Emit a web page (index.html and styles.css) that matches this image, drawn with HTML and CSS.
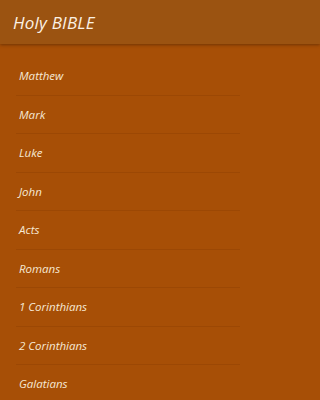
FILE: index.html
```html
<!DOCTYPE html>
<html>
<head>
<meta charset="utf-8">
<link rel="stylesheet" href="styles.css">
</head>
<body>
<header class="appbar"><h1 class="title">Holy BIBLE</h1></header>
<ul class="books">
<li class="book">Matthew</li>
<li class="book">Mark</li>
<li class="book">Luke</li>
<li class="book">John</li>
<li class="book">Acts</li>
<li class="book">Romans</li>
<li class="book">1 Corinthians</li>
<li class="book">2 Corinthians</li>
<li class="book">Galatians</li>
</ul>
</body>
</html>
```
FILE: styles.css
```css
html {
  background: #a74f06;
}
body {
  margin: 0;
  padding: 0;
  height: 400px;
  overflow: hidden;
  background: #a74f06;
  font-family: "Open Sans", "DejaVu Sans", sans-serif;
  color: #f6e8d4;
}
.appbar {
  height: 44px;
  background: #9b5311;
  box-shadow: 0 1px 3px rgba(60, 25, 0, 0.5);
  display: flex;
  align-items: center;
  padding-left: 13px;
  position: relative;
  z-index: 1;
}
.title {
  margin: 0;
  font-size: 17px;
  font-weight: 400;
  font-style: italic;
  letter-spacing: 0.2px;
  color: #fbf1e4;
}
.books {
  list-style: none;
  margin: 0;
  max-width: 224px;
  padding: 13px 12px 0 16px;
}
.book {
  height: 38.5px;
  display: flex;
  align-items: center;
  padding-left: 3px;
  font-size: 11.5px;
  font-style: italic;
  box-sizing: border-box;
  border-bottom: 1px solid rgba(120, 50, 0, 0.22);
}
```
